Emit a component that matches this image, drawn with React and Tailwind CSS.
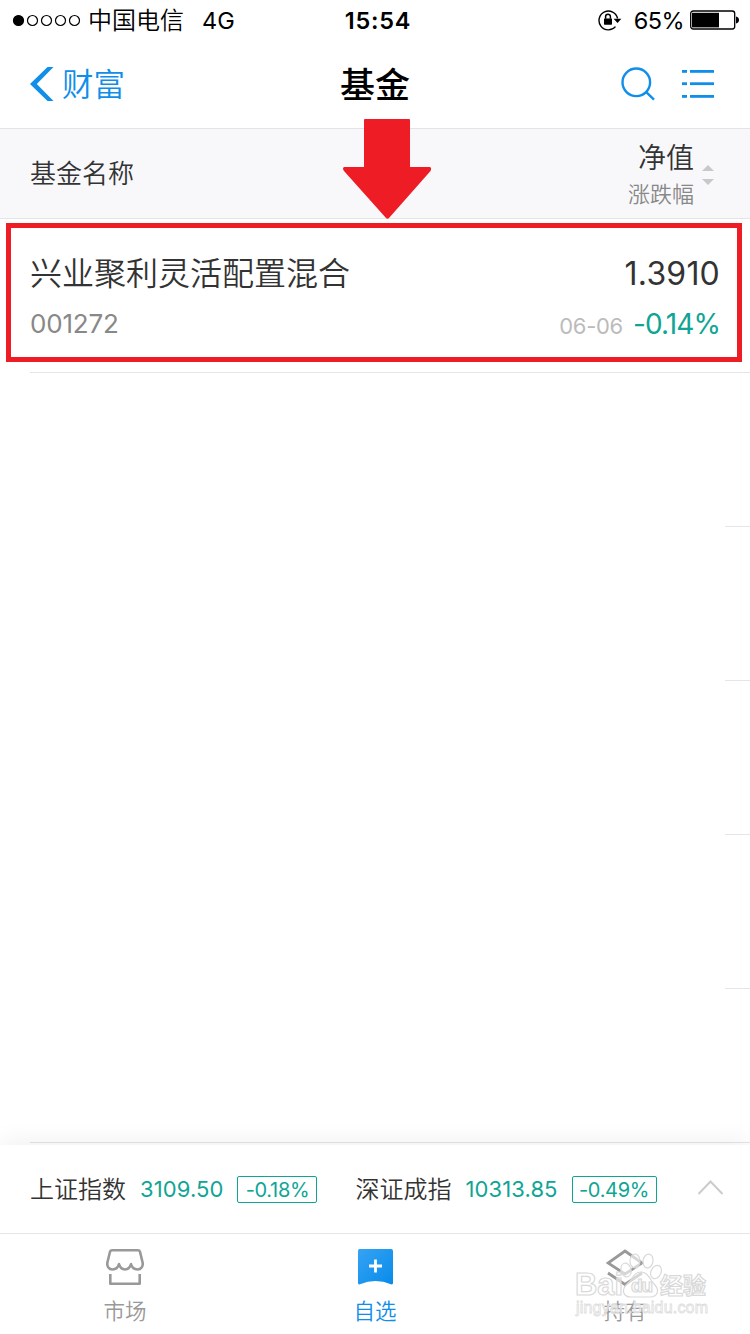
import React from 'react';

const placeholders = [1, 2, 3, 4];

const indexes = [
  { name: '上证指数', value: '3109.50', change: '-0.18%', box: 'w-20', gap: 'mr-[38px]' },
  { name: '深证成指', value: '10313.85', change: '-0.49%', box: 'w-[85px]', gap: '' },
];

const StatusBar = () => (
  <div className="flex h-10 items-center justify-between pl-3 pr-[11px] text-black">
    <div className="flex w-[260px] items-center">
      <svg width="70" height="14" viewBox="0 0 70 14" fill="none" stroke="#000" strokeWidth="1.2">
        <circle cx="6.5" cy="7.5" r="5" fill="#000" />
        {[20.5, 34.5, 48.5, 62.5].map(cx => (
          <circle key={cx} cx={cx} cy="7.5" r="5" />
        ))}
      </svg>
      <span className="ml-[6px] pt-[2px] text-[24px] font-[350] leading-10">中国电信</span>
      <span className="ml-[18px] pt-[2px] text-[23.5px] leading-10">4G</span>
    </div>
    <span className="pl-[5px] pt-[2px] text-[23.5px] font-semibold leading-10 tracking-[0.8px]">15:54</span>
    <div className="flex w-[260px] items-center justify-end">
      <svg width="24" height="22" viewBox="0 0 24 22" fill="none">
        <path d="M17.5 17.6A9.4 9.4 0 1 1 19.6 9.5" stroke="#000" strokeWidth="1.4" />
        <path d="M15.6 9.8H23.4L19.5 14Z" fill="#000" />
        <rect x="6" y="9.5" width="8" height="6.2" rx="0.6" fill="#000" />
        <path d="M7.6 9.8V7.6a2.4 2.4 0 0 1 4.8 0v2.2" stroke="#000" strokeWidth="1.5" />
      </svg>
      <span className="ml-3 pt-[2px] text-[23.5px] leading-10 tracking-[-0.6px]">65%</span>
      <svg className="ml-[6px]" width="49" height="20" viewBox="0 0 49 20">
        <rect x="0.7" y="1" width="44" height="18" rx="2.5" fill="none" stroke="#000" strokeWidth="1.3" />
        <rect x="2" y="2.8" width="27" height="14.6" fill="#000" />
        <path d="M46 6.5c2 .3 3 1.8 3 3.5s-1 3.2-3 3.5z" fill="#000" />
      </svg>
    </div>
  </div>
);

const NavBar = () => (
  <div className="flex h-[89px] items-center justify-between border-b border-[#e2e3e5] pl-[30px] pr-9">
    <div className="flex w-[260px] items-center text-[#108ee9]">
      <svg width="24" height="34" viewBox="0 0 24 34" fill="currentColor">
        <path d="M17.5 0H23.5L6.8 17L23.5 34H17.5L0 17Z" />
      </svg>
      <span className="ml-2 pt-[2px] text-[31.5px] font-[350] leading-[86px]">财富</span>
    </div>
    <h1 className="pl-[1px] pt-[2px] text-[35px] font-medium leading-[85px] text-black">基金</h1>
    <div className="flex w-[255px] items-center justify-end text-[#108ee9]">
      <svg width="34" height="34" viewBox="0 0 34 34" fill="none" stroke="currentColor" strokeWidth="2.4">
        <circle cx="15.3" cy="15.3" r="13.8" />
        <path d="M25 24.8L33 32.6" />
      </svg>
      <svg className="ml-[27px]" width="32" height="30" viewBox="0 0 32 30" fill="currentColor">
        {[1, 13.3, 26].map(y => (
          <g key={y}>
            <rect x="0" y={y} width="5" height="2.8" />
            <rect x="8" y={y} width="24" height="2.8" />
          </g>
        ))}
      </svg>
    </div>
  </div>
);

const ColumnHeader = () => (
  <div className="flex h-[90px] items-center justify-between border-b border-[#e5e5e6] bg-[#f8f8fb] pl-[30px] pr-9">
    <span className="text-[26px] font-[350] leading-[89px] text-[#333]">基金名称</span>
    <div className="flex items-center">
      <div className="flex flex-col items-end pt-1">
        <span className="text-[28px] font-[350] leading-9 text-[#333]">净值</span>
        <span className="text-[22px] font-[350] leading-9 text-[#888]">涨跌幅</span>
      </div>
      <svg className="ml-2 mt-[3px]" width="12" height="20" viewBox="0 0 12 20" fill="#c8c8c8">
        <path d="M0 6L6 0L12 6Z" />
        <path d="M0 14L6 20L12 14Z" />
      </svg>
    </div>
  </div>
);

const FundRow = () => (
  <div className="relative h-[154px]">
    <div className="ml-[30px] flex h-full justify-between border-b border-[#e5e5e5] pr-[30px] pt-8">
      <div>
        <p className="text-[32px] font-[350] leading-[46px] text-[#333]">兴业聚利灵活配置混合</p>
        <p className="mt-2 text-[26px] leading-[38px] tracking-[-0.2px] text-[#888]">001272</p>
      </div>
      <div className="text-right">
        <p className="text-[32px] leading-[46px] tracking-[0.2px] text-[#333]">1.3910</p>
        <p className="mt-2 flex items-baseline justify-end leading-[38px]">
          <span className="text-[22px] tracking-[-0.3px] text-[#bbb]">06-06</span>
          <span className="ml-[10px] text-[28px] tracking-[-0.9px] text-[#0fa595]">-0.14%</span>
        </p>
      </div>
    </div>
    {/* highlight frame */}
    <div className="absolute left-[6px] top-1 h-[139px] w-[736px] border-5 border-[#ee1c25]" />
    <svg className="absolute left-[343px] top-[-100px]" width="89" height="100" viewBox="0 0 89 100">
      <path
        d="M22 0H66Q67 0 67 1V48H87Q89 49 87.5 52L46 99Q44.5 100.5 43 99L1 52Q-1 49 1 48H21V1Q21 0 22 0Z"
        fill="#ee1c25"
      />
    </svg>
  </div>
);

const IndexBar = () => (
  <div className="flex h-[89px] items-center border-b border-[#e5e5e5] bg-white pl-[30px] pr-[27px] shadow-[0_-2px_24px_rgba(0,0,0,0.07)]">
    {indexes.map(item => (
      <div key={item.name} className={`flex items-center ${item.gap}`}>
        <span className="pt-[2px] text-[24px] font-[350] leading-[86px] text-[#333]">{item.name}</span>
        <span className="ml-[14px] text-[22px] leading-[88px] tracking-[0.1px] text-[#0fa595]">{item.value}</span>
        <span
          className={`ml-[14px] h-[27px] rounded-[2px] border border-[#0fa595] text-center text-[20px] leading-[27px] tracking-[-0.3px] text-[#0fa595] ${item.box}`}
        >
          {item.change}
        </span>
      </div>
    ))}
    <svg className="mb-1 ml-auto" width="25" height="15" viewBox="0 0 25 15" fill="none" stroke="#ccc" strokeWidth="2">
      <path d="M0.5 14L12.5 1.5L24.5 14" />
    </svg>
  </div>
);

const StoreIcon = () => (
  <svg width="38" height="36" viewBox="0 0 38 36" fill="none" stroke="#999" strokeWidth="2.6" strokeLinejoin="round">
    <path d="M6 1.3H32Q33.5 1.3 34 2.7L36.6 13.5C37.3 17.5 35 20.5 31.5 20.5C28 20.5 25.8 18 25 15.2C24 18.5 22 20.5 19 20.5C16 20.5 14 18.5 13 15.2C12.2 18 10 20.5 6.5 20.5C3 20.5 .7 17.5 1.4 13.5L4 2.7Q4.5 1.3 6 1.3Z" />
    <path d="M4.3 25V34.7H33.7V25" />
  </svg>
);

const BookmarkIcon = () => (
  <svg width="36" height="36" viewBox="0 0 36 36">
    <defs>
      <linearGradient id="mark" x1="0" y1="0" x2="1" y2="1">
        <stop offset="0" stopColor="#35a3f4" />
        <stop offset="1" stopColor="#088be9" />
      </linearGradient>
    </defs>
    <path d="M2.5 0H34Q36 0 36 2V34Q36 36 34 35.3Q18.500 28.500 3 35.3Q1 36 1 34V2Q1 0 2.5 0Z" fill="url(#mark)" />
    <path d="M12 17H25M18.5 10.5V23.5" stroke="#fff" strokeWidth="2.8" />
  </svg>
);

const LayersIcon = () => (
  <svg width="38" height="38" viewBox="0 0 38 38" fill="none" stroke="#999" strokeWidth="2.8">
    <path d="M19 2L36 14L19 25L2 14Z" />
    <path d="M2 24L19 35.5L36 24" />
  </svg>
);

const tabs = [
  { label: '市场', icon: <StoreIcon />, color: 'text-[#999]' },
  { label: '自选', icon: <BookmarkIcon />, color: 'text-[#108ee9]' },
  { label: '持有', icon: <LayersIcon />, color: 'text-[#999]' },
];

const Watermark = () => (
  <svg
    className="absolute left-[573px] top-[18px]"
    width="140"
    height="72"
    viewBox="0 0 140 72"
    fill="#fff"
    fillOpacity="0.6"
    stroke="#d9d9d9"
    strokeWidth="1.2"
    fontFamily="Liberation Sans, Noto Sans CJK SC, sans-serif"
  >
    <ellipse cx="53" cy="18" rx="5" ry="7" transform="rotate(-15 53 18)" />
    <ellipse cx="62" cy="9" rx="5" ry="7" />
    <ellipse cx="75" cy="9" rx="5" ry="7" transform="rotate(10 75 9)" />
    <ellipse cx="83" cy="20" rx="5" ry="7" transform="rotate(25 83 20)" />
    <path d="M68 20C75 20 77 28 82 33C87 39 84 45 77 45H58C50 45 48 38 54 32C60 28 60 20 68 20Z" />
    <text x="2" y="43" fontSize="32" fontWeight="bold" textLength="48" lengthAdjust="spacingAndGlyphs">Bai</text>
    <text x="58" y="40" fontSize="19" fontWeight="bold" textLength="22">du</text>
    <text x="87" y="42" fontSize="23" fontWeight="bold" textLength="46">经验</text>
    <text x="3" y="61" fontSize="16" stroke="#ddd" strokeWidth="0.8" textLength="132">jingyan.baidu.com</text>
  </svg>
);

const TabBar = () => (
  <div className="relative grid h-[100px] grid-cols-3 bg-white">
    {tabs.map(tab => (
      <div key={tab.label} className={`flex flex-col items-center pt-[15px] ${tab.color}`}>
        <div className="h-[38px]">{tab.icon}</div>
        <span className="mt-2 text-[21.5px] font-[350] leading-8">{tab.label}</span>
      </div>
    ))}
    <Watermark />
  </div>
);

const App = () => {
  return (
    <div className="flex h-[1334px] w-[750px] flex-col overflow-hidden bg-white font-['Inter','Noto_Sans_CJK_SC',sans-serif]">
      <StatusBar />
      <NavBar />
      <ColumnHeader />
      <div className="h-[926px] shrink-0">
        <FundRow />
        {placeholders.map(n => (
          <div key={n} className="ml-[725px] h-[154px] border-b border-[#e5e5e5]" />
        ))}
        <div className="ml-[30px] h-[154px] border-b border-[#e5e5e5]" />
      </div>
      <IndexBar />
      <TabBar />
    </div>
  );
};

export default App;
